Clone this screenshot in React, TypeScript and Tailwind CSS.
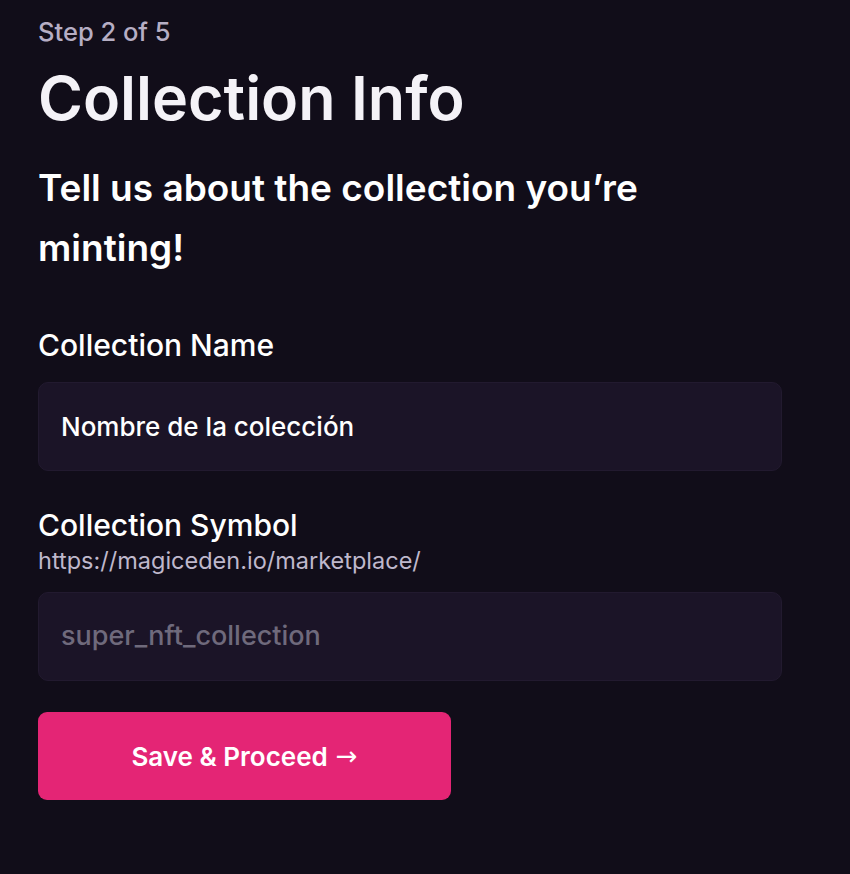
export default function App() {
  return (
    <div className="min-h-[874px] w-full bg-[#110d19] font-['Inter',sans-serif] text-white">
      <div className="w-[782px] pl-[38px] pt-[18px]">
        <p className="text-[25.5px] leading-[28px] font-medium text-[#b6aec4]">Step 2 of 5</p>
        <h1 className="mt-[16px] text-[61px] leading-[72px] font-semibold text-[#f4f2f7]">Collection Info</h1>
        <p className="mt-[24px] max-w-[680px] text-[37px] leading-[60px] font-semibold text-white">
          Tell us about the collection you’re minting!
        </p>

        <div className="mt-[47px]">
          <label className="block text-[30px] leading-[40px] font-medium text-white">Collection Name</label>
          <div className="mt-[17px] flex h-[89px] items-center rounded-[10px] border border-[#221a2f] bg-[#1b1427] px-[22px]">
            <span className="text-[26px] font-medium text-white">Nombre de la colección</span>
          </div>
        </div>

        <div className="mt-[34px]">
          <label className="block text-[30px] leading-[40px] font-medium text-white">Collection Symbol</label>
          <p className="mt-[1px] text-[23.5px] leading-[30px] text-[#bfb8cc]">https://magiceden.io/marketplace/</p>
          <div className="mt-[16px] flex h-[89px] items-center rounded-[10px] border border-[#221a2f] bg-[#1b1427] px-[22px]">
            <span className="text-[27px] font-medium text-[#6f6a7c]">super_nft_collection</span>
          </div>
        </div>

        <button className="mt-[31px] flex h-[88px] w-[413px] items-center justify-center rounded-[9px] bg-[#e42575] text-[26px] font-semibold text-white">
          Save &amp; Proceed <span className="ml-[8px] font-['DejaVu_Sans',sans-serif] font-normal">→</span>
        </button>
      </div>
    </div>
  );
}
